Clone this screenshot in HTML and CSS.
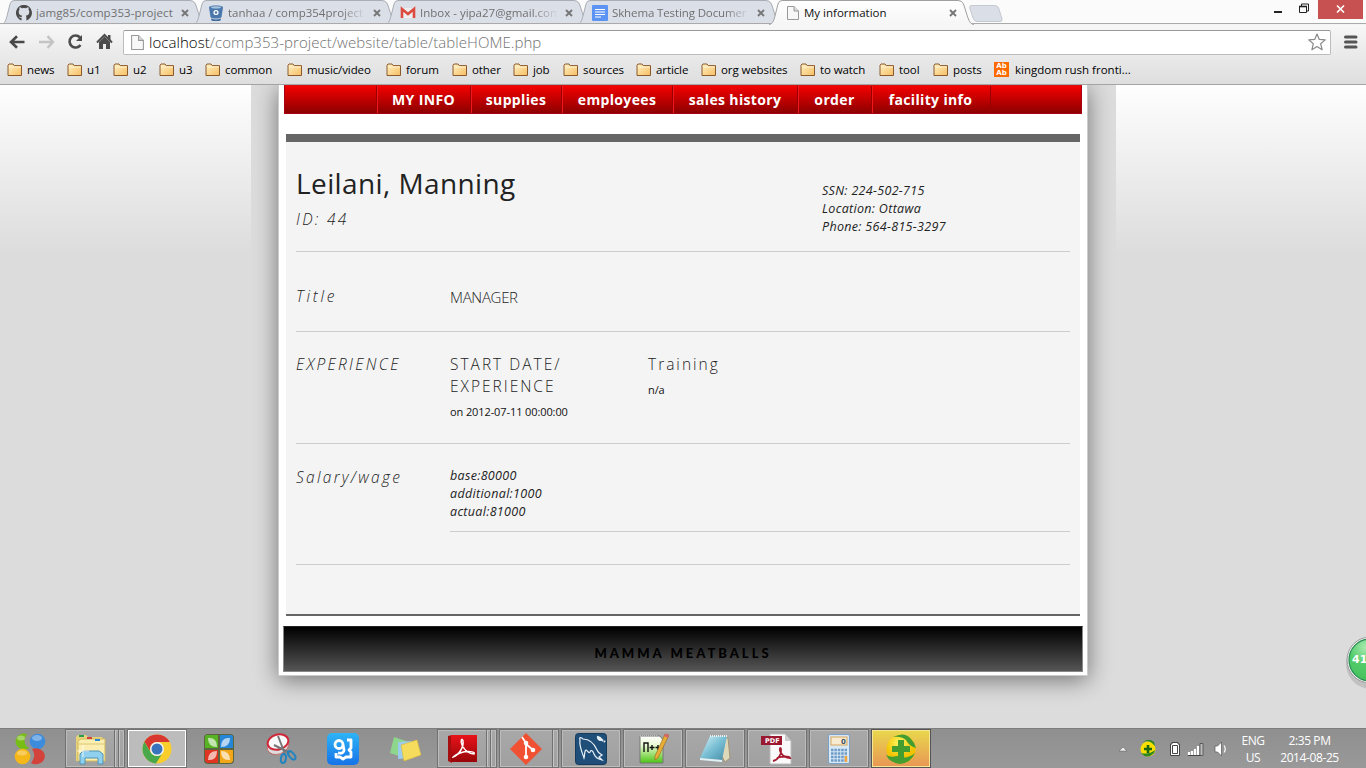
FILE: index.html
```html
<!DOCTYPE html>
<html lang="en">
<head>
<meta charset="utf-8">
<title>My information</title>
<link rel="stylesheet" href="styles.css">
</head>
<body>
<svg class="defs" width="0" height="0">
  <defs>
    <linearGradient id="fold" x1="0" y1="0" x2="1" y2="1"><stop offset="0" stop-color="#fff0c4"/><stop offset="1" stop-color="#f7be62"/></linearGradient>
    <linearGradient id="act" x1="0" y1="0" x2="0" y2="1"><stop offset="0" stop-color="#fff"/><stop offset="1" stop-color="#f6f6f6"/></linearGradient>
    <linearGradient id="redg" x1="0" y1="0" x2="0" y2="1"><stop offset="0" stop-color="#e8141a"/><stop offset="1" stop-color="#980509"/></linearGradient>
    <linearGradient id="blueg" x1="0" y1="0" x2="0" y2="1"><stop offset="0" stop-color="#2fb4f6"/><stop offset="1" stop-color="#1673e8"/></linearGradient>
    <linearGradient id="greeng" x1="0" y1="0" x2="0" y2="1"><stop offset="0" stop-color="#fff"/><stop offset=".35" stop-color="#e8fad0"/><stop offset="1" stop-color="#4cc414"/></linearGradient>
    <linearGradient id="noteg" x1="0" y1="0" x2="1" y2="1"><stop offset="0" stop-color="#d9f4fa"/><stop offset=".5" stop-color="#79bfd4"/><stop offset="1" stop-color="#438ba6"/></linearGradient>
    <radialGradient id="yellg" cx=".45" cy=".3"><stop offset="0" stop-color="#fff766"/><stop offset="1" stop-color="#f2c300"/></radialGradient>
    <radialGradient id="ballg" cx=".4" cy=".2" r=".8"><stop offset="0" stop-color="#a8eab0"/><stop offset=".5" stop-color="#52cc6a"/><stop offset="1" stop-color="#45c05c"/></radialGradient>
    <symbol id="folder" viewBox="0 0 16 14"><path d="M1 12.5V2.2L2 1h4l1.2 1.6h7.3V12.5z" fill="url(#fold)" stroke="#8a5a2c"/><path d="M2 4h12" stroke="#fff3d0"/></symbol>
    <symbol id="tab" viewBox="0 0 208 25"><path d="M1 24.5C5 24 6 20 7.500 14L10 4Q11 .5 14 .5H190Q194 .5 195.500 4L199 15C201 21 202 24 206 24.500"/></symbol>
    <symbol id="x" viewBox="0 0 8 8"><path d="M1 1l6 6M7 1L1 7" stroke="#777" stroke-width="1.9"/></symbol>
    <symbol id="page" viewBox="0 0 12 14"><path d="M.5 .5h6.500l4.500 4.500v8.500H.5z" fill="#f8f8f8" stroke="#999"/><path d="M7 .5V5h4.500" fill="#ddd" stroke="#999"/></symbol>
  </defs>
</svg>

<header class="chrome">
  <div class="tabs">
    <div class="tab">
      <svg class="shape"><use href="#tab"/></svg>
      <svg class="fav" viewBox="0 0 16 16"><path d="M5.500 15.500v-2.600C3.800 13.200 3.300 12.400 2.700 11.500 5 12 4.500 12.600 5.600 12c.2-.7.400-1 .7-1.200C3.700 10.300 2.700 9 2.700 7c0-1 .3-1.700.8-2.300-.3-.8-.2-1.600.1-2.400 1 0 1.600.4 2.300.9a8 8 0 0 1 4.200 0c.7-.5 1.300-.9 2.300-.9.3.8.4 1.600.1 2.400.5.6.8 1.300.8 2.300 0 2-1 3.300-3.600 3.800.5.400.7 1 .7 1.900v2.800A8 8 0 1 0 5.500 15.500z" fill="#4a4a4a"/></svg>
      <span class="t t1">jamg85/comp353-project</span><svg class="x"><use href="#x"/></svg>
    </div>
    <div class="tab">
      <svg class="shape"><use href="#tab"/></svg>
      <svg class="fav" viewBox="0 0 16 16"><path d="M1 2.500C1-.1 15-.1 15 2.500L13.500 12c-1 2-10 2-11 0z" fill="#4a78ad"/><ellipse cx="8" cy="2.400" rx="5" ry="1.100" fill="#a9c3de"/><circle cx="8" cy="7.500" r="2.600" fill="#fff"/><circle cx="8" cy="7.500" r="1.200" fill="#4a78ad"/><path d="M3 13.500q5 2 10 0l-.5 2q-4.500 1.500-9 0z" fill="#3a679c"/></svg>
      <span class="t t2 fade">tanhaa / comp354project /</span><svg class="x"><use href="#x"/></svg>
    </div>
    <div class="tab">
      <svg class="shape"><use href="#tab"/></svg>
      <svg class="fav" viewBox="0 0 16 16"><path d="M1 3h14v10H1z" fill="#eee"/><path d="M2 13V4l6 5 6-5v9" fill="none" stroke="#dc4b3f" stroke-width="2.600"/></svg>
      <span class="t t3 fade">Inbox - yipa27@gmail.com</span><svg class="x"><use href="#x"/></svg>
    </div>
    <div class="tab">
      <svg class="shape"><use href="#tab"/></svg>
      <svg class="fav" viewBox="0 0 16 16"><rect width="16" height="16" rx="1" fill="#5b94f2"/><path d="M3 4.500h10M3 7h10M3 9.500h10M3 12h6" stroke="#fff" stroke-width="1.200"/></svg>
      <span class="t t4 fade">Skhema Testing Documer</span><svg class="x"><use href="#x"/></svg>
    </div>
    <div class="tab active">
      <svg class="shape"><use href="#tab"/></svg>
      <svg class="fav pg"><use href="#page"/></svg>
      <span class="t t5">My information</span><svg class="x"><use href="#x"/></svg>
    </div>
    <svg class="newtab" viewBox="0 0 34 18"><path d="M2 .5H26Q29 .5 30 4L33 14Q33.500 16.500 31 16.500H8Q5.500 16.500 4.500 14L1 4Q0 .5 2 .5z" fill="#d9dee7" stroke="#c5c9d0"/></svg>
    <div class="winbtns">
      <svg viewBox="0 0 90 20" width="90" height="20"><path d="M1 12h8" stroke="#222" stroke-width="2"/><path d="M26.500 6.500h7v6h-7zM28.500 6V4h7v7h-2" fill="none" stroke="#222"/><path d="M26 6.500h8" stroke="#222" stroke-width="1.600"/><path d="M45 0h45v19H45z" fill="#c75050"/><path d="M64 5.500l7 7M71 5.500l-7 7" stroke="#fff" stroke-width="1.700"/></svg>
    </div>
  </div>
  <div class="toolbar">
    <svg class="nav" viewBox="0 0 116 24"><path d="M17 12H4M9.500 6.200L3.500 12l6 5.800" transform="translate(7.500 0)" fill="none" stroke="#484848" stroke-width="2.600"/><path d="M39 12h13M47.500 6.200l5.500 5.800-5.500 5.800" fill="none" stroke="#c4c4c4" stroke-width="2.400"/><path d="M80 7.500A6 6 0 1 0 80.500 15" fill="none" stroke="#4c4c4c" stroke-width="2.600"/><path d="M82 5v6h-6z" fill="#4c4c4c"/><path d="M97 12.500l7.500-7.500 7.500 7.500" fill="none" stroke="#4c4c4c" stroke-width="2"/><path d="M99 12l5.500-5.500L110 12v7h-4v-5h-3v5h-4zM108 5h2.500v6L108 9z" fill="#4c4c4c"/></svg>
    <div class="omni"><svg class="pg"><use href="#page"/></svg><span class="url"><b>localhost</b>/comp353-project/website/table/tableHOME.php</span>
      <svg class="star" viewBox="0 0 18 18"><path d="M9 1l2.300 5.400 5.900.5-4.500 3.900 1.400 5.900L9 13.600l-5.100 3.100 1.400-5.900L.8 6.900l5.900-.5z" fill="#fff" stroke="#888" stroke-width="1.200" stroke-linejoin="round"/></svg></div>
    <svg class="menu" viewBox="0 0 14 14"><path d="M1.500 2h10.500M1.500 7h10.500M1.500 12h10.500" stroke="#555" stroke-width="3" stroke-linecap="round"/></svg>
  </div>
  <nav class="marks">
    <span><svg><use href="#folder"/></svg>news</span><span><svg><use href="#folder"/></svg>u1</span><span><svg><use href="#folder"/></svg>u2</span><span><svg><use href="#folder"/></svg>u3</span><span><svg><use href="#folder"/></svg>common</span><span><svg><use href="#folder"/></svg>music/video</span><span><svg><use href="#folder"/></svg>forum</span><span><svg><use href="#folder"/></svg>other</span><span><svg><use href="#folder"/></svg>job</span><span><svg><use href="#folder"/></svg>sources</span><span><svg><use href="#folder"/></svg>article</span><span><svg><use href="#folder"/></svg>org websites</span><span><svg><use href="#folder"/></svg>to watch</span><span><svg><use href="#folder"/></svg>tool</span><span><svg><use href="#folder"/></svg>posts</span><span class="king"><i class="abab">Ab<br>Ab</i>kingdom rush fronti...</span>
  </nav>
</header>

<main class="view">
  <div class="column">
    <div class="sheet">
      <nav class="menubar"><span></span><a>MY INFO</a><a>supplies</a><a>employees</a><a>sales history</a><a>order</a><a>facility info</a><span class="end"></span></nav>
      <section class="resume">
        <div class="row head">
          <div class="who"><h1>Leilani, Manning</h1><h2 class="id">ID: 44</h2></div>
          <div class="contact it"><span class="c1">SSN: 224-502-715</span><span class="c2">Location: Ottawa</span><span class="c3">Phone: 564-815-3297</span></div>
        </div>
        <div class="row title"><h2 class="h-title">Title</h2><p class="mgr">MANAGER</p></div>
        <div class="row exp"><h2 class="h-exp">EXPERIENCE</h2>
          <div><h3><span class="s1">START DATE/</span><br><span class="s2">EXPERIENCE</span></h3><p class="small date">on 2012-07-11 00:00:00</p></div>
          <div><h3><span class="s3">Training</span></h3><p class="small">n/a</p></div>
        </div>
        <div class="row pay"><h2 class="h-pay">Salary/wage</h2><div class="it wages"><span class="w1">base:80000</span><span class="w2">additional:1000</span><span class="w3">actual:81000</span></div></div>
      </section>
      <footer class="foot">MAMMA MEATBALLS</footer>
    </div>
  </div>
  <svg class="ball" viewBox="0 0 20 60"><circle cx="25" cy="31" r="25" fill="#000" opacity=".12"/><circle cx="24" cy="27" r="23" fill="#f4f4f4" stroke="#999"/><circle cx="24" cy="27" r="21" fill="url(#ballg)" stroke="#248a50" stroke-width="1.200"/><text x="6" y="30" class="balltext">41</text></svg>
</main>

<div class="taskbar">
  <div class="slot start"><svg viewBox="0 0 32 32"><path d="M13 1A8.500 8 0 1 0 15 15Q9 11 11 5Q12 3 13 1z" fill="#78bd16"/><circle cx="23.500" cy="8.500" r="7.800" fill="#3d8cdc"/><circle cx="8.500" cy="23.500" r="7.800" fill="#f5b818"/><path d="M18 16A9 8 0 1 1 17 30Q23 23 18 16z" fill="#d3433c"/><ellipse cx="23" cy="5" rx="5" ry="3" fill="#fff" opacity=".35"/><ellipse cx="7" cy="5" rx="4" ry="2.500" fill="#fff" opacity=".35"/><ellipse cx="8" cy="20" rx="5" ry="2.500" fill="#fff" opacity=".3"/></svg></div>
  <div class="slot btn stack2"><svg viewBox="0 0 32 32"><path d="M1 28V4l2-2h8l2 2h14l2 3v21z" fill="#e8d27a"/><path d="M3 8l3-2h24v22H3z" fill="#fbeeb0" stroke="#d2b95c"/><path d="M3 11h27" stroke="#dcc673"/><path d="M4 3h5" stroke="#2a9c50" stroke-width="2"/><path d="M12 5h5" stroke="#d3433c" stroke-width="2"/><path d="M20 7h5" stroke="#2d86d0" stroke-width="2"/><path d="M5 31V21l3-3h16l4 3v10h-5v-6H10v6z" fill="#8ed0ee" stroke="#5094b6"/><path d="M8 12v12M2 18h12" stroke="#fff" opacity=".8"/></svg></div>
  <div class="slot btn current"><svg viewBox="0 0 32 32"><circle cx="16" cy="16" r="14.500" fill="#f8cd2c"/><path d="M3.400 8.800A14.500 14.500 0 0 1 28.800 9H16a7 7 0 0 0-6 10.500z" fill="#d93830"/><path d="M3.400 8.800A14.500 14.500 0 0 0 15 30.500L21.500 20a7 7 0 0 1-12-1z" fill="#49a84c"/><circle cx="16" cy="16" r="7" fill="#f4f4f4"/><circle cx="16" cy="16" r="5.500" fill="#3973bc"/></svg></div>
  <div class="slot"><svg viewBox="0 0 32 32"><rect x="1" y="1" width="30" height="30" rx="4" fill="#5a6540"/><path d="M3 2h12v13H2V4z" fill="#57b324"/><path d="M17 2h12l1 2v11H17z" fill="#2586d8"/><path d="M2 17h13v13H4l-2-2z" fill="#df3422"/><path d="M17 17h13v11l-2 2H17z" fill="#f2a71b"/><path d="M5 5q9-1 9 9-9 0-9-9zM27 5q-9-1-9 9 9 0 9-9zM5 27q9 1 9-9-9 0-9 9zM27 27q-9 1-9-9 9 0 9 9z" fill="#fff" opacity=".65"/></svg></div>
  <div class="slot"><svg viewBox="0 0 32 32"><ellipse cx="12.500" cy="13" rx="11" ry="8" transform="rotate(-20 13 12)" fill="#ddd" stroke="#c55" stroke-width=".7"/><ellipse cx="13" cy="9" rx="10.500" ry="7.500" transform="rotate(-15 13 9)" fill="#fafafa" stroke="#cf2838" stroke-width="2"/><path d="M13 3l7 18M9 12l16 8" stroke="#777" stroke-width="2"/><ellipse cx="18.500" cy="25.500" rx="2.500" ry="4.500" transform="rotate(10 18 25)" fill="none" stroke="#2384c0" stroke-width="2"/><ellipse cx="26.500" cy="22" rx="2.500" ry="5" transform="rotate(-40 27 22)" fill="none" stroke="#2384c0" stroke-width="2"/></svg></div>
  <div class="slot"><svg viewBox="0 0 32 32"><rect width="32" height="32" rx="5" fill="url(#blueg)"/><circle cx="12" cy="11.500" r="4" fill="none" stroke="#fff" stroke-width="2.800"/><path d="M16 12l1 5q0 4-6 3M9 20v4h4l3 2 3-2h5v-5l-2-2 2-2V7h-4" fill="none" stroke="#fff" stroke-width="2.800" stroke-linejoin="round"/></svg></div>
  <div class="slot"><svg viewBox="0 0 32 32"><path d="M5 4l15 5-4 16-15-5z" fill="#8dd68c"/><path d="M9 9l14-1 2 17-16 1z" fill="#9bcbed"/><path d="M12 12l16-5 4 15-17 6z" fill="#f5dc5c" stroke="#dabb3d" stroke-width=".6"/></svg></div>
  <div class="slot btn stack2"><svg viewBox="0 0 32 32"><path d="M1 3l4-1v28l-4-2z" fill="#a50f10"/><path d="M4 2h26v27H4z" fill="url(#redg)"/><path d="M6 24C12 22 17 14 16 8c-1-4-3 0-1 4 3 6 7 9 12 9 2-3-8-3-14-1-5 2-8 5-7 4" fill="none" stroke="#fff" stroke-width="1.500"/></svg></div>
  <div class="slot btn stack1"><svg viewBox="0 0 32 32"><path d="M16 0l16 16-16 16L0 16z" fill="#f05133"/><path d="M12 4l4 6v14M16 11l7 6" stroke="#fff" stroke-width="1.800" fill="none"/><circle cx="16" cy="10" r="2.300" fill="#fff"/><circle cx="16" cy="24" r="2.300" fill="#fff"/><circle cx="23" cy="17" r="2.300" fill="#fff"/></svg></div>
  <div class="slot btn"><svg viewBox="0 0 32 32"><rect x=".5" y=".5" width="31" height="31" rx="3" fill="#1f4f78" stroke="#173b5a"/><path d="M9 25C7 19 4 13 5 7 4 4 6 4 8 6c6 0 11 4 14 11 1 3 3 4 5 5l-3 2 3 3c-4-1-7-3-8-6-1-3-3-5-4-2-1 2-3-2-4-2-2 1-1 5-2 8z" fill="none" stroke="#e8f0f6" stroke-width="1.200"/><path d="M24 4l4 4M23 3a3 3 0 0 0 3 4M29 8l1 1" stroke="#e8f0f6" stroke-width="2" fill="none"/></svg></div>
  <div class="slot btn"><svg viewBox="0 0 32 32"><path d="M3 3h20l3 4v23H3z" fill="url(#greeng)" stroke="#777"/><path d="M3 3h18" stroke="#bbb" stroke-width="2" stroke-dasharray="1 1"/><path d="M7 19v-9h4v9M12.500 14.500h5M15 12v5M18.500 14.500h5M21 12v5" fill="none" stroke="#111" stroke-width="1.400"/><path d="M28 1l4 1-11 23-3 2 0-4z" fill="#e7ad35" stroke="#946422" stroke-width=".6"/><path d="M28 1l4 1-1 3-4-2z" fill="#d6646a"/></svg></div>
  <div class="slot btn"><svg viewBox="0 0 32 32"><path d="M12 3l17 2 2 20-5 4z" fill="#ded8ba" stroke="#a39573"/><path d="M11 3h17l-5 24-22-2z" fill="url(#noteg)"/><path d="M11 3h18" stroke="#eee" stroke-width="2" stroke-dasharray="1 1"/><path d="M1 25l22 2v2L1 27z" fill="#dff2f5"/></svg></div>
  <div class="slot btn"><svg viewBox="0 0 32 32"><path d="M9 1h15l6 7v23H9z" fill="#fafafa" stroke="#bbb"/><path d="M24 1v7h6z" fill="#ccc"/><path d="M0 3h21v9H0z" fill="#9a1830"/><text x="4" y="10" class="pdft">PDF</text><path d="M12 28c5-1 9-7 8-12-1-3-2 1 0 4 2 3 5 5 9 5-1-2-8-2-13 0" fill="none" stroke="#a51c30" stroke-width="1.800"/></svg></div>
  <div class="slot btn"><svg viewBox="0 0 32 32"><rect x="5.500" y="1.500" width="21" height="29" rx="1.500" fill="#d8e8f5" stroke="#7ba1c4"/><rect x="8" y="4" width="16" height="8" fill="#f7ecd2" stroke="#d9a65a"/><text x="18" y="11" class="calct">0</text><path d="M8 17h16M8 20.500h16M8 24h16M8 27.500h16" stroke="#6e9bc7" stroke-width="2.500" stroke-dasharray="2.500 .9"/><path d="M23 23v6" stroke="#efa53a" stroke-width="2.500"/></svg></div>
  <div class="slot btn hot"><svg viewBox="0 0 32 32"><circle cx="16" cy="16" r="14.500" fill="url(#yellg)"/><path d="M8 4Q20-2 26 6Q30 10 31 15Q24 13 21 7Q16 3 8 4zM1 22Q6 25 12 23Q22 27 30 20Q26 30 15 31Q5 30 1 22z" fill="#449d30"/><path d="M13 7h6v6h6v6h-6v6h-6v-6H7v-6h6z" fill="#449d30"/></svg></div>
  <div class="tray">
    <svg viewBox="0 0 112 24" width="112" height="24"><path d="M1 14l4-4 4 4z" fill="#eee" stroke="#555" stroke-width=".5"/><circle cx="30" cy="12" r="7.500" fill="#f7e000"/><path d="M24 6q5-4 10 0l3 3-1-4q-6-5-12 1zM23 16q6 7 13 0l1-3q-6 5-14 3z" fill="#2c8821"/><path d="M30 8v8M26 12h8" stroke="#196510" stroke-width="2.600"/><path d="M54 5.500h6v1.500h1.500v11.500h-9V7H54z" fill="#fff" stroke="#444"/><path d="M54.500 8.500h5v8h-5z" fill="#fff" stroke="#444"/><path d="M71 18v-3M74 18v-4M77 18v-6M80 18V9" stroke="#fff" stroke-width="2.200"/><path d="M70 18.500h13M82.500 6v12" stroke="#444"/><path d="M82 6.500h3v12h-3z" fill="#bbb" stroke="#444" stroke-width=".7"/><path d="M97 9h2.500l4-4v14l-4-4H97z" fill="#fff" stroke="#555" stroke-width=".7"/><path d="M106 8.500q2.500 3.500 0 7" fill="none" stroke="#fff" stroke-width="1.200"/></svg>
    <div class="lang"><span>ENG</span><span>US</span></div>
    <div class="clock"><span>2:35 PM</span><span>2014-08-25</span></div>
  </div>
</div>
</body>
</html>
```
FILE: styles.css
```css
*{box-sizing:border-box}
body{margin:0;width:1366px;height:768px;overflow:hidden;display:flex;flex-direction:column;font-family:"Open Sans",sans-serif;background:#dcdcdc}
h1,h2,h3,p{margin:0;font-weight:400}
.defs{position:absolute}
svg{flex:none;display:block}
.chrome{height:85px;flex:none;background:#fbfbfb;border-bottom:1px solid #a4a4a4}
.tabs{height:25px;display:flex;position:relative}
.tab{width:192px;height:25px;flex:none;position:relative;display:flex;align-items:center;padding-left:16px;color:#707070}
.shape{position:absolute;left:0;top:0;width:208px;height:25px;fill:#dadfe8;stroke:#a9adb4}
.tab.active{z-index:2;color:#111}
.active .shape{fill:url(#act);stroke:#a0a0a0}
.fav{position:relative;width:16px;height:16px;margin-right:4px}
.fav.pg{width:12px;height:14px;margin:0 5px 0 3px}
.t{position:relative;width:141px;overflow:hidden;white-space:nowrap;font-size:11.5px;line-height:18px;height:18px}
.t1{letter-spacing:.1px}
.t4{letter-spacing:-.12px}
.fade{mask-image:linear-gradient(90deg,#000 80%,transparent 98%)}
.tab .x{position:relative;width:8px;height:8px;margin-left:4px}
.newtab{width:34px;height:18px;margin:5px 0 0 9px}
.winbtns{margin:0 3px 0 auto}
.toolbar{height:33px;border-top:1px solid #f4f4f4;margin-top:-1px;position:relative;display:flex;align-items:center;background:linear-gradient(#f7f7f7,#e9e9e9);box-shadow:0 -1px #aaa;padding-top:2px}
.nav{width:116px;height:24px}
.omni{margin-left:7px;width:1208px;height:25px;background:#fff;border:1px solid #bcbcbc;border-top-color:#999;border-radius:2px;display:flex;align-items:center;padding:0 4px 0 7px}
.omni .pg{width:13px;height:15px}
.url{margin-left:5px;font-size:15px;font-weight:300;line-height:22px;color:#707070;flex:1;letter-spacing:.06px}
.url b{font-weight:300;color:#000}
.star{width:18px;height:18px}
.menu{width:14px;height:14px;margin-left:13px}
.marks{height:27px;display:grid;grid-template-columns:60px 46px 46px 46px 82px 99px 66px 61px 50px 73px 65px 99px 79px 54px 61px 160px;padding:0 0 2px 7px;background:linear-gradient(#e9e9e9,#dedede);font-size:11.5px;color:#000}
.marks span{display:flex;align-items:center;white-space:nowrap;letter-spacing:-.1px}
.marks .king{letter-spacing:0}
.marks svg{width:16px;height:14px;margin-right:4px}
.abab{width:15px;height:15px;background:#ff6a00;color:#fff;font:bold 7px/7px "DejaVu Sans",sans-serif;text-align:center;margin-right:6px;padding-top:1px;letter-spacing:0}
.view{height:643px;flex:none;position:relative;display:flex;justify-content:center;background:linear-gradient(#fff 0,#fbfbfb 15px,#dcdcdc 170px)}
.column{width:865px;display:flex;justify-content:center;background:#dcdcdc;overflow:hidden}
.sheet{width:810px;height:591px;background:#fff;border:1px solid #ccc;border-top:0;padding:0 4px;box-shadow:0 4px 22px rgba(0,0,0,.48)}
.menubar{height:29px;display:grid;grid-template-columns:92px 94px 91px 111px 125px 74px 118px 1fr;background:linear-gradient(#f40000,#8c0000);border:1px solid #a80010;border-top-color:#d11;margin-right:1px;margin-left:1px}
.menubar a{border-left:1px solid #f01818;box-shadow:-1px 0 #900;color:#fff;font-weight:700;font-size:14px;line-height:27px;text-align:center;white-space:nowrap;letter-spacing:.35px;padding-right:2px}
.menubar .end{border-left:1px solid #900}
.resume{margin:20px 2px 0 3px;width:794px;height:482px;background:#f4f4f4;border-top:8px solid #666;border-bottom:2px solid #666;padding:0 10px;color:#222}
.row{border-bottom:1px solid #ccc;display:flex}
.head{height:110px;padding-top:21px}
.who{width:526px}
h1{font-size:28px;line-height:40px;color:#222;letter-spacing:.4px}
h2{font-size:15.5px;line-height:22px;font-style:italic;font-weight:300;letter-spacing:2.3px}
.id{margin-top:5px}
.h-title{letter-spacing:2.8px}
.it{font-size:12.5px;line-height:18px;font-style:italic;display:flex;flex-direction:column;letter-spacing:.32px}
.contact{padding-top:19px}
.title{height:80px;padding-top:33px}
.title h2,.exp h2,.pay h2{width:154px}
.mgr{font-size:15px;font-weight:300;line-height:24px;letter-spacing:-.3px}
.exp{height:112px;padding-top:21px}
.exp div{width:198px}
h3{font-size:15.5px;font-weight:300;line-height:22px;letter-spacing:2px}
.small{font-size:11px;line-height:18px;color:#111;letter-spacing:-.1px}
.date{margin-top:6px}
.exp div:last-child .small{margin-top:6px}
.pay{height:121px;padding-top:22px}
.wages{width:620px;height:66px;padding-top:1px;border-bottom:1px solid #ccc}
.foot{height:46px;margin:10px 0 0;background:linear-gradient(#000,#555);border:1px solid #888;border-top-color:#222;font:900 13px/53px Lato,sans-serif;letter-spacing:3px;text-align:center;color:#000}
.ball{position:absolute;right:0;top:548px;width:20px;height:60px}
.balltext{font:bold 11px "DejaVu Sans",sans-serif;fill:#fff}
.taskbar{height:40px;flex:none;display:flex;background:linear-gradient(#8f8f8f,#999);border-top:1px solid #7d7d7d}
.slot{width:62px;height:39px;flex:none;display:flex;justify-content:center;align-items:center;padding-right:2px;position:relative}
.slot.start{width:65px;padding-right:5px}
.slot svg{width:32px;height:32px}
.btn{width:60px;margin-right:2px;padding:0;background:linear-gradient(#a8a8a8,#a0a0a0);border:1px solid #717171;box-shadow:inset 0 0 0 1px #bcbcbc}
.current{background:#bcbcbc;box-shadow:inset 0 0 0 1px #fff}
.hot{background:linear-gradient(#e9d84c,#e89655);box-shadow:inset 0 0 0 1px #f7e795;border-color:#555}
.stack1,.stack2{padding-right:6px}
.stack1::after,.stack2::after{content:"";position:absolute;right:0;top:0;width:5px;height:37px;border-left:1px solid #717171;box-shadow:inset 1px 0 #c4c4c4}
.stack2{padding-right:9px}
.stack2::before{content:"";position:absolute;right:5px;top:0;width:4px;height:37px;border-left:1px solid #717171;box-shadow:inset 1px 0 #c4c4c4}
.pdft{font:bold 6.500px "DejaVu Sans",sans-serif;fill:#fff}
.calct{font:bold 7px "DejaVu Sans",sans-serif;fill:#456}
.tray{margin-left:auto;width:248px;display:flex;align-items:center;color:#fff;font-size:12px;line-height:17px;text-align:center}
.lang,.clock{display:flex;flex-direction:column;letter-spacing:-.4px}
.lang{width:46px}
.clock{width:67px}
```
